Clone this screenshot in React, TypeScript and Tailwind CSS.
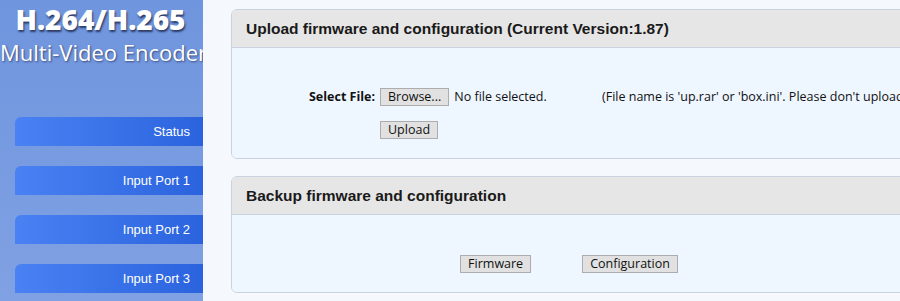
import React from "react";

const navItems = ["Status", "Input Port 1", "Input Port 2", "Input Port 3"];

const Btn: React.FC<{ label: string; className?: string }> = ({ label, className = "" }) => (
  <button
    className={`h-[18px] border border-[#adadad] bg-[#e1e1e1] px-[7px] text-[12.5px] leading-none text-[#111] ${className}`}
    style={{ fontFamily: '"Open Sans", sans-serif' }}
  >
    {label}
  </button>
);

const Panel: React.FC<{ title: string; children: React.ReactNode; bodyHeight: string }> = ({
  title,
  children,
  bodyHeight,
}) => (
  <div className="w-[676px] shrink-0 overflow-hidden rounded-[6px] border border-[#c9d3df]">
    <div className="flex h-[38px] items-center border-b border-[#c9d3df] bg-[#e6e6e6] pl-[14px]">
      <h2
        className="text-[15.5px] font-bold text-[#1a1a1a]"
        style={{ fontFamily: '"Liberation Sans", Arial, sans-serif' }}
      >
        {title}
      </h2>
    </div>
    <div className={`bg-[#eef6ff] ${bodyHeight}`}>{children}</div>
  </div>
);

export default function App() {
  return (
    <div className="flex h-[301px] w-[900px] overflow-hidden bg-[#f5f9fe]">
      {/* Sidebar */}
      <div className="flex w-[203px] shrink-0 flex-col overflow-hidden bg-gradient-to-b from-[#6f95de] to-[#80a1e3]">
        <div
          className="mt-[3px] whitespace-nowrap pr-[2px] text-center text-[28px] font-extrabold leading-[33px] text-white"
          style={{ fontFamily: '"Open Sans", sans-serif', textShadow: "1px 2px 2px #2a3a66" }}
        >
          H.264/H.265
        </div>
        <div
          className="mt-[2px] whitespace-nowrap text-[22px] leading-[28px] text-white"
          style={{ fontFamily: '"Open Sans", sans-serif', textShadow: "1px 1px 2px #3a4a7a" }}
        >
          Multi-Video Encoder
        </div>
        <div className="mt-[51px] flex flex-col gap-[20px] pl-[15px]">
          {navItems.map((item) => (
            <div
              key={item}
              className="flex h-[29px] items-center justify-end rounded-tl-[6px] bg-gradient-to-r from-[#4a82f4] to-[#2a63dd] pr-[13px] text-[13px] text-white"
              style={{ fontFamily: '"Liberation Sans", Arial, sans-serif' }}
            >
              {item}
            </div>
          ))}
        </div>
      </div>

      {/* Main */}
      <div className="flex flex-col gap-[17px] pl-[28px] pt-[9px]">
        <Panel title="Upload firmware and configuration (Current Version:1.87)" bodyHeight="h-[110px]">
          <div
            className="grid grid-cols-[148px_222px_auto] items-center gap-y-[14px] whitespace-nowrap pt-[40px] text-[12.5px] text-[#111]"
            style={{ fontFamily: '"Open Sans", sans-serif' }}
          >
            <div className="pr-[5px] text-right font-bold">Select File:</div>
            <div className="flex items-center gap-[5px]">
              <Btn label="Browse..." />
              <span>No file selected.</span>
            </div>
            <div>(File name is 'up.rar' or 'box.ini'. Please don't upload</div>
            <div />
            <div>
              <Btn label="Upload" />
            </div>
            <div />
          </div>
        </Panel>

        <Panel title="Backup firmware and configuration" bodyHeight="h-[77px]">
          <div className="flex justify-center gap-[51px] pt-[40px]">
            <Btn label="Firmware" />
            <Btn label="Configuration" />
          </div>
        </Panel>
      </div>
    </div>
  );
}
